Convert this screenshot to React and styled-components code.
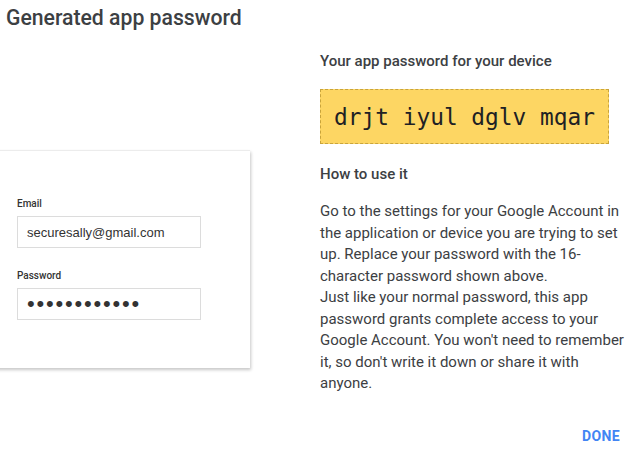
import React from "react";
import styled, { createGlobalStyle } from "styled-components";

const Global = createGlobalStyle`
  body{
    margin:0;
    background:#fff;
    font-family: Roboto, "Liberation Sans", Arial, sans-serif;
  }
`;

function App (){
  return (
    <>
      <Global />
      <Dialog>
        <Title>Generated app password</Title>
        <Body>
          <LeftPane>
            <DeviceCard>
              <FieldLabel>Email</FieldLabel>
              <FakeInput>securesally@gmail.com</FakeInput>
              <FieldLabel gap>Password</FieldLabel>
              <FakeInput dots>{"•".repeat(12)}</FakeInput>
            </DeviceCard>
          </LeftPane>
          <RightPane>
            <Heading>Your app password for your device</Heading>
            <PasswordBox>drjt iyul dglv mqar</PasswordBox>
            <Heading top={20}>How to use it</Heading>
            <Para>
              Go to the settings for your Google Account in the application or device you are trying to set up. Replace your password with the 16-character password shown above.
              <br />
              Just like your normal password, this app password grants complete access to your Google Account. You won't need to remember it, so don't write it down or share it with anyone.
            </Para>
          </RightPane>
        </Body>
        <Footer>
          <DoneButton>DONE</DoneButton>
        </Footer>
      </Dialog>
    </>
  );
};

const Dialog = styled.div`
  width:642px;
  height:456px;
  display:flex;
  flex-direction:column;
  overflow:hidden;
  color:#3c4043;
`;

const Title = styled.h1`
  margin:0;
  padding:6px 0 10px 6px;
  font-size:21.2px;
  line-height:24px;
  font-weight:500;
  color:#3c4043;
`;

const Body = styled.div`
  flex:1;
  display:flex;
  align-items:flex-start;
`;

const LeftPane = styled.div`
  width:250px;
  flex:none;
  padding-top:110px;
`;

const DeviceCard = styled.div`
  margin-left:-10px;
  width:260px;
  height:218px;
  box-sizing:border-box;
  padding:47px 0 0 27px;
  background:#fff;
  border-top:1px solid #ececec;
  box-shadow:1px 2px 3px rgba(0,0,0,0.22);
  font-family:"Liberation Sans", Arial, sans-serif;
`;

const FieldLabel = styled.div`
  font-family:Roboto, "Liberation Sans", Arial, sans-serif;
  font-size:10px;
  line-height:12px;
  font-weight:500;
  color:#333;
  margin-top:${p => p.gap ? "22px" : "0"};
`;

const FakeInput = styled.div`
  margin-top:6px;
  width:184px;
  height:32px;
  box-sizing:border-box;
  border:1px solid #dcdcdc;
  padding-left:9px;
  display:flex;
  align-items:center;
  font-size:${p => p.dots ? "22px" : "13px"};
  letter-spacing:${p => p.dots ? "1.8px" : "0"};
  color:#333;
`;

const RightPane = styled.div`
  margin-left:70px;
  width:312px;
  flex:none;
  padding-top:11px;
`;

const Heading = styled.h2`
  margin:${p => p.top || 0}px 0 0;
  font-size:15px;
  line-height:20px;
  font-weight:500;
  color:#3c4043;
`;

const PasswordBox = styled.div`
  margin-top:18px;
  width:289px;
  height:55px;
  box-sizing:border-box;
  background:#fdd663;
  border:1px dashed #c9a43b;
  display:flex;
  align-items:center;
  justify-content:center;
  font-family:"DejaVu Sans Mono", "Liberation Mono", monospace;
  font-size:22.8px;
  color:#202124;
  white-space:pre;
`;

const Para = styled.p`
  margin:17px 0 0;
  font-size:15px;
  line-height:21.5px;
  color:#3c4043;
`;

const Footer = styled.div`
  height:40px;
  display:flex;
  align-items:center;
  justify-content:flex-end;
  padding-right:22px;
`;

const DoneButton = styled.button`
  border:none;
  background:none;
  padding:0;
  font-family:Roboto, "Liberation Sans", Arial, sans-serif;
  font-size:14px;
  font-weight:700;
  color:#4285f4;
  letter-spacing:0.4px;
  cursor:pointer;
`;

export default App;
